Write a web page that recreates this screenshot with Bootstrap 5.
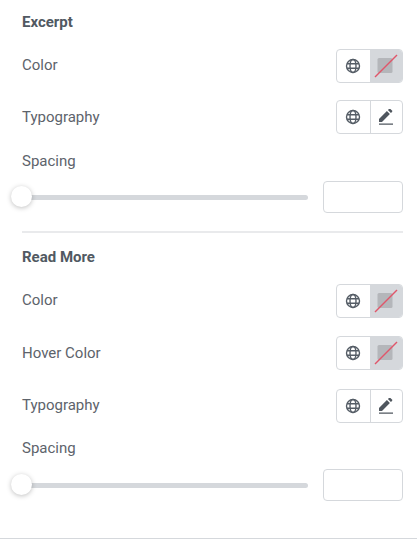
<!DOCTYPE html>
<html lang="en">
<head>
<meta charset="utf-8">
<title>Style panel</title>
<link href="https://cdn.jsdelivr.net/npm/bootstrap@5.3.0/dist/css/bootstrap.min.css" rel="stylesheet">
<style>
html,body{height:539px;overflow:hidden;background:#fff}
body{font-family:Roboto,"Liberation Sans",sans-serif;font-size:15px;color:#5d636b}
.panel{height:539px;border-bottom:1px solid #d5d8dc;padding:13px 14px 0 22px}
.sec-title{font-weight:700;font-size:15px;line-height:18px;color:#515962;margin:0}
.ctl-row{height:34px}
.ctl-label{line-height:18px}
.ctl-pair{width:67px;height:34px;border:1px solid #d5d8dc;border-radius:4px;overflow:hidden}
.ctl-cell{width:33px;height:100%}
.ctl-cell+.ctl-cell{width:33px;border-left:1px solid #d5d8dc}
.ctl-none{background:#d5d8dc}
.sp-label{line-height:18px}
.slide-track{height:5px;background:#d5d8dc;border-radius:3px;width:286px}
.slide-wrap{width:286px;height:32px}
.slide-thumb{position:absolute;left:-11px;top:5px;width:21px;height:21px;border-radius:50%;background:#fff;box-shadow:0 1px 5px rgba(0,0,0,.25)}
.sp-input{width:80px;height:32px;border:1px solid #d5d8dc;border-radius:4px;background:#fff}
.sep{height:2px;background:#e9eaec;width:381px}
.m1{margin-top:18px}.m2{margin-top:17px}.m3{margin-top:18px}.m4{margin-top:11px}
.m5{margin-top:18px}.m6{margin-top:15px}.m7{margin-top:18px}.m8{margin-top:18px}.m9{margin-top:19px}.m10{margin-top:16px}.m11{margin-top:12px}
.lbl-up{transform:translateY(-1px)}
</style>
</head>
<body>
<svg width="0" height="0" class="d-block" aria-hidden="true">
<defs>
<symbol id="ic-globe" viewBox="0 0 16 16"><g fill="none" stroke="#555d66" stroke-width="1.4"><circle cx="8" cy="8" r="6.5"/><ellipse cx="8" cy="8" rx="3" ry="6.5"/><path d="M2 5.8h12M2 10.2h12"/></g></symbol>
<symbol id="ic-pen" viewBox="0 0 16 16"><path fill="#4f565e" d="M1 11.2 8.9 3.3l3 3-7.9 7.9H1zM9.9 2.3l1.1-1.1a1 1 0 0 1 1.4 0l1.6 1.6a1 1 0 0 1 0 1.4l-1.1 1.1z" transform="translate(0 -1.2)"/><path fill="#4f565e" d="M1 14.6h14v1.2H1z"/></symbol>
<symbol id="ic-none" viewBox="0 0 24 24"><rect x="3.5" y="4" width="15" height="15" rx="1.5" fill="#b4b6ba"/><path d="M1 23 23 1" stroke="#e0566a" stroke-width="1.5"/></symbol>
</defs>
</svg>
<div class="panel">
  <p class="sec-title">Excerpt</p>

  <div class="ctl-row d-flex justify-content-between align-items-center m1">
    <span class="ctl-label lbl-up">Color</span>
    <div class="ctl-pair d-flex"><div class="ctl-cell d-flex align-items-center justify-content-center"><svg width="16" height="16"><use href="#ic-globe"/></svg></div><div class="ctl-cell ctl-none d-flex align-items-center justify-content-center"><svg width="24" height="24"><use href="#ic-none"/></svg></div></div>
  </div>
  <div class="ctl-row d-flex justify-content-between align-items-center m2">
    <span class="ctl-label">Typography</span>
    <div class="ctl-pair d-flex"><div class="ctl-cell d-flex align-items-center justify-content-center"><svg width="16" height="16"><use href="#ic-globe"/></svg></div><div class="ctl-cell d-flex align-items-center justify-content-center"><svg width="16" height="16"><use href="#ic-pen"/></svg></div></div>
  </div>
  <div class="sp-label m3">Spacing</div>
  <div class="d-flex justify-content-between align-items-center m4">
    <div class="slide-wrap position-relative d-flex align-items-center"><div class="slide-track"></div><div class="slide-thumb"></div></div>
    <div class="sp-input"></div>
  </div>

  <div class="sep m5"></div>

  <p class="sec-title m6">Read More</p>

  <div class="ctl-row d-flex justify-content-between align-items-center m7">
    <span class="ctl-label lbl-up">Color</span>
    <div class="ctl-pair d-flex"><div class="ctl-cell d-flex align-items-center justify-content-center"><svg width="16" height="16"><use href="#ic-globe"/></svg></div><div class="ctl-cell ctl-none d-flex align-items-center justify-content-center"><svg width="24" height="24"><use href="#ic-none"/></svg></div></div>
  </div>
  <div class="ctl-row d-flex justify-content-between align-items-center m8">
    <span class="ctl-label">Hover Color</span>
    <div class="ctl-pair d-flex"><div class="ctl-cell d-flex align-items-center justify-content-center"><svg width="16" height="16"><use href="#ic-globe"/></svg></div><div class="ctl-cell ctl-none d-flex align-items-center justify-content-center"><svg width="24" height="24"><use href="#ic-none"/></svg></div></div>
  </div>
  <div class="ctl-row d-flex justify-content-between align-items-center m9">
    <span class="ctl-label lbl-up">Typography</span>
    <div class="ctl-pair d-flex"><div class="ctl-cell d-flex align-items-center justify-content-center"><svg width="16" height="16"><use href="#ic-globe"/></svg></div><div class="ctl-cell d-flex align-items-center justify-content-center"><svg width="16" height="16"><use href="#ic-pen"/></svg></div></div>
  </div>
  <div class="sp-label m10">Spacing</div>
  <div class="d-flex justify-content-between align-items-center m11">
    <div class="slide-wrap position-relative d-flex align-items-center"><div class="slide-track"></div><div class="slide-thumb"></div></div>
    <div class="sp-input"></div>
  </div>
</div>
<script src="https://cdn.jsdelivr.net/npm/bootstrap@5.3.0/dist/js/bootstrap.bundle.min.js"></script>
</body>
</html>
